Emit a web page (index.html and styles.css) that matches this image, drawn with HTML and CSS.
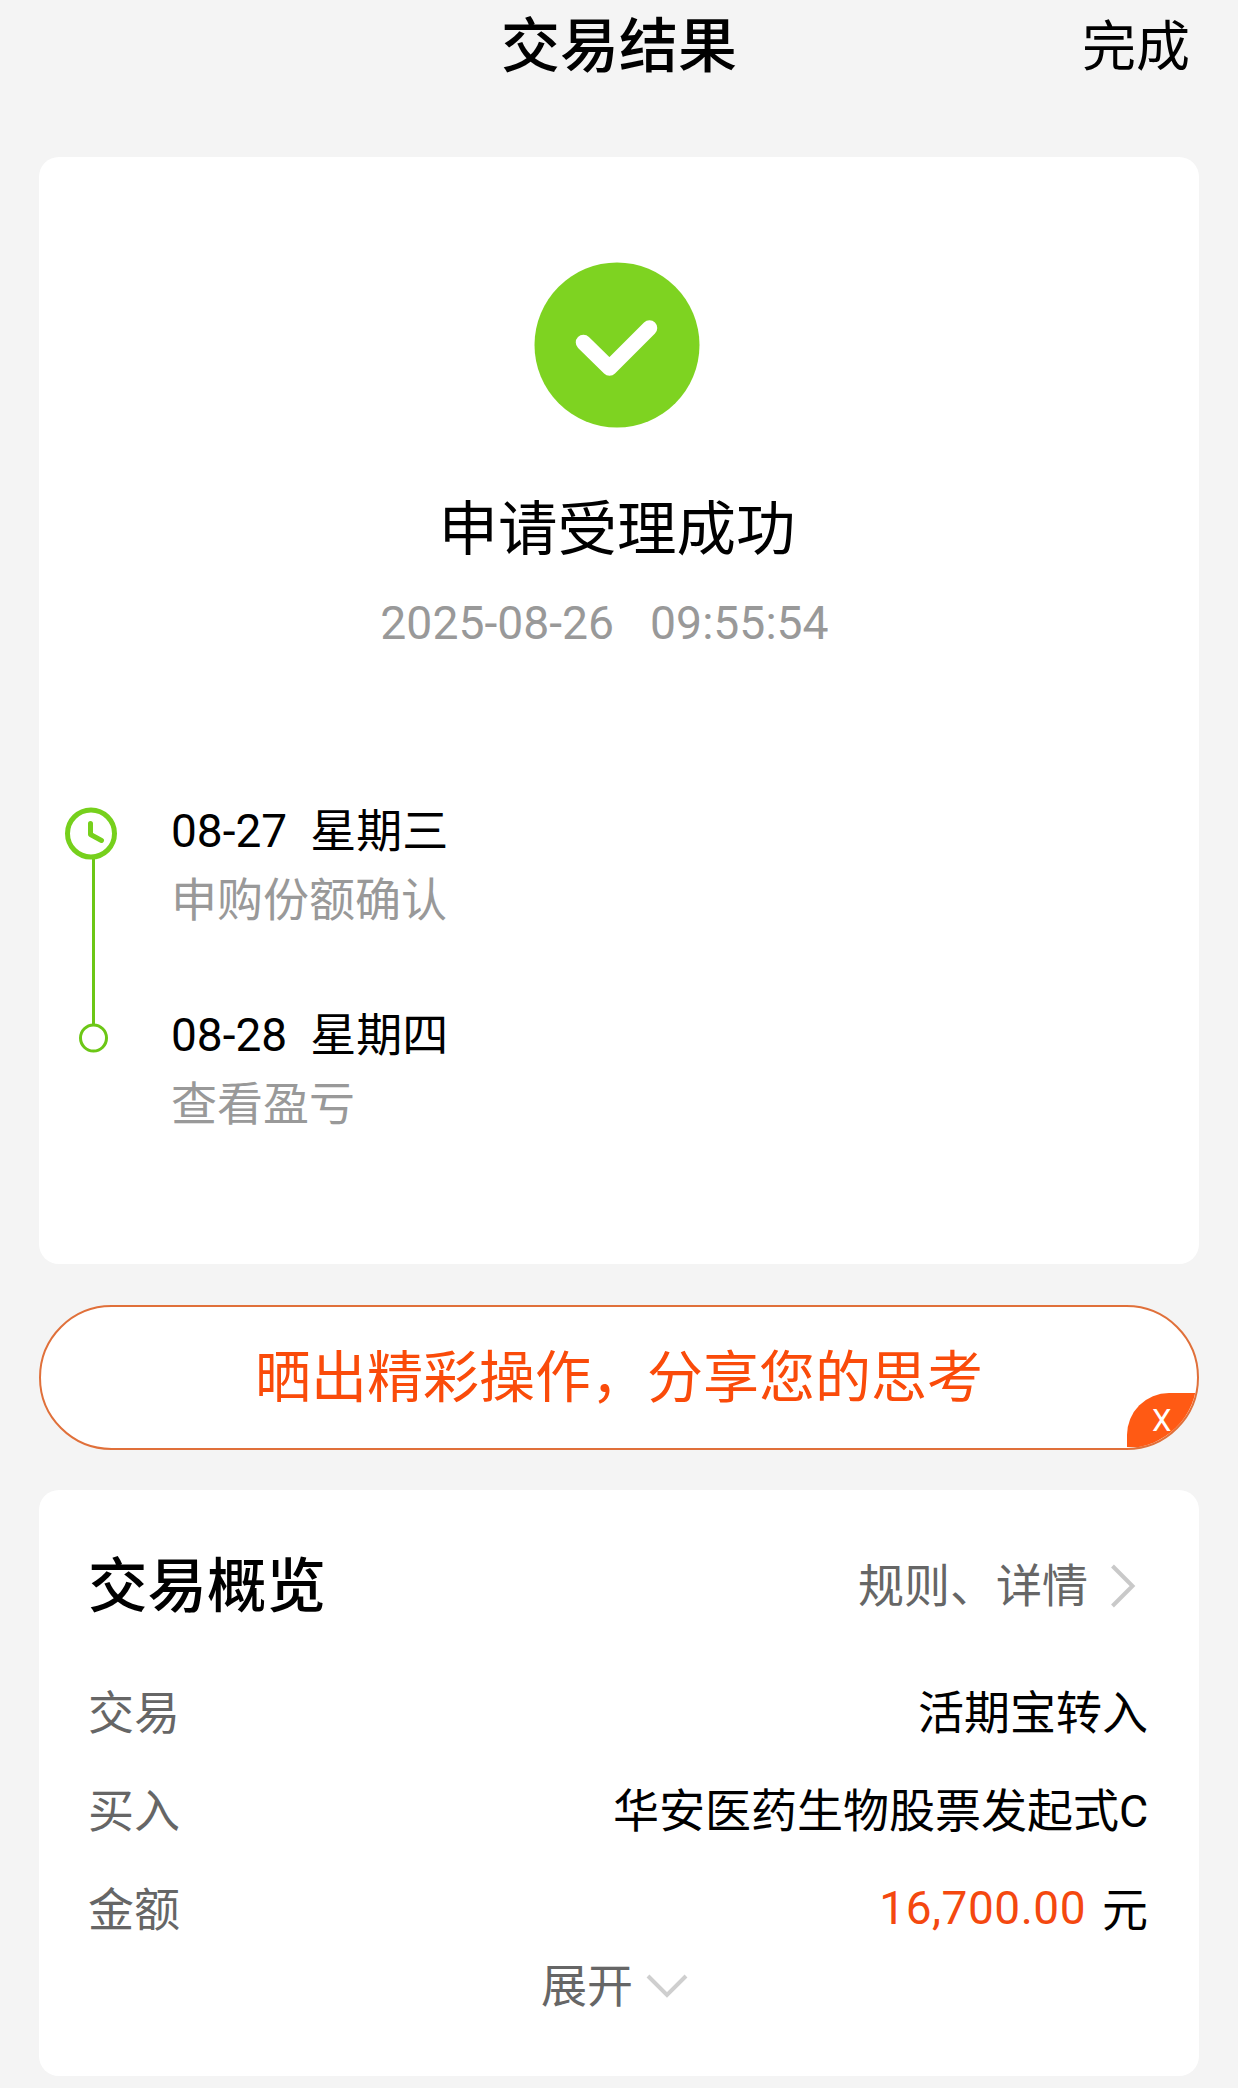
FILE: index.html
```html
<!DOCTYPE html>
<html lang="zh-CN">
<head>
<meta charset="utf-8">
<title>交易结果</title>
<link rel="stylesheet" href="styles.css">
</head>
<body>
<header class="topbar">
  <h1 class="topbar-title">交易结果</h1>
  <a class="topbar-done">完成</a>
</header>
<main class="content">
  <section class="card result">
    <svg class="result-icon" viewBox="0 0 166 166"><circle cx="83" cy="83" r="82.5" fill="#7ed321"/><path d="M49.500 80.500L75.500 106L115.500 66" fill="none" stroke="#fff" stroke-width="15.500" stroke-linecap="round" stroke-linejoin="round"/></svg>
    <h2 class="result-title">申请受理成功</h2>
    <p class="result-time"><span>2025-08-26</span><span>09:55:54</span></p>
    <div class="timeline">
      <svg class="timeline-rail" viewBox="0 0 56 250"><path d="M30.500 52V219" stroke="#6cc716" stroke-width="3"/><circle cx="28" cy="27.500" r="23.500" fill="#fff" stroke="#76d01c" stroke-width="5"/><path d="M27.500 17.500V28.500L38.500 34.500" fill="none" stroke="#76d01c" stroke-width="5" stroke-linecap="round" stroke-linejoin="round"/><circle cx="30.500" cy="232" r="13" fill="#fff" stroke="#6cc716" stroke-width="3"/></svg>
      <ol class="steps">
        <li class="step"><p class="step-date"><span>08-27</span><span>星期三</span></p><p class="step-note">申购份额确认</p></li>
        <li class="step"><p class="step-date"><span>08-28</span><span>星期四</span></p><p class="step-note">查看盈亏</p></li>
      </ol>
    </div>
  </section>
  <section class="share">
    <span class="share-text">晒出精彩操作，分享您的思考</span>
    <span class="share-close">X</span>
  </section>
  <section class="card overview">
    <div class="overview-head">
      <h2 class="overview-title">交易概览</h2>
      <a class="overview-link">规则、详情<svg class="chevron-right" viewBox="0 0 26 44"><path d="M2.500 2L22.500 22L2.500 42" fill="none" stroke="#c9c9c9" stroke-width="4"/></svg></a>
    </div>
    <dl class="rows">
      <div class="row"><dt>交易</dt><dd>活期宝转入</dd></div>
      <div class="row"><dt>买入</dt><dd>华安医药生物股票发起式<span class="share-class">C</span></dd></div>
      <div class="row"><dt>金额</dt><dd><span class="amount">16,700.00</span>元</dd></div>
    </dl>
    <a class="expand">展开<svg class="chevron-down" viewBox="0 0 42 24"><path d="M2 2L21 21L40 2" fill="none" stroke="#cfcfcf" stroke-width="4"/></svg></a>
  </section>
</main>
</body>
</html>
```

FILE: styles.css
```css
* {
  box-sizing: border-box;
  margin: 0;
  padding: 0;
}

body {
  background: #f4f4f4;
  color: #000;
  font-family: Roboto, "Noto Sans CJK SC", sans-serif;
  font-size: 46px;
  line-height: 60px;
}

.topbar {
  display: grid;
  grid-template-columns: 1fr auto 1fr;
  align-items: center;
  height: 92px;
  padding: 0 48px;
}

.topbar-title {
  grid-column: 2;
  padding-top: 1px;
  font-size: 59px;
  font-weight: 500;
}

.topbar-done {
  justify-self: end;
  padding-top: 3px;
  font-size: 54px;
}

.content {
  display: flex;
  flex-direction: column;
  padding: 65px 39px 12px;
}

.card {
  background: #fff;
  border-radius: 20px;
}

.result {
  display: flex;
  flex-direction: column;
  align-items: center;
  height: 1107px;
  padding-top: 105px;
}

.result-icon {
  width: 166px;
  height: 166px;
  margin-right: 4px;
}

.result-title {
  margin-top: 72px;
  margin-right: 4px;
  font-size: 59.500px;
  font-weight: 400;
  line-height: 60px;
}

.result-time {
  display: flex;
  gap: 36px;
  margin-top: 33px;
  margin-right: 29px;
  color: #999;
  font-size: 46.300px;
}

.timeline {
  display: flex;
  align-self: stretch;
  gap: 52px;
  margin-top: 153px;
  padding-left: 24px;
}

.timeline-rail {
  width: 56px;
  height: 250px;
}

.steps {
  display: flex;
  flex-direction: column;
  gap: 75px;
  margin-top: -5px;
  list-style: none;
}

.step {
  display: flex;
  flex-direction: column;
  gap: 9px;
}

.step-date {
  display: flex;
  gap: 23px;
}

.step-note {
  color: #999;
}

.share {
  position: relative;
  display: flex;
  align-items: center;
  justify-content: center;
  height: 145px;
  margin: 41px 0 40px;
  overflow: hidden;
  background: #fff;
  border: 2px solid #e0703a;
  border-radius: 73px;
  color: #fa4b0a;
  font-size: 56px;
}

.share-close {
  position: absolute;
  right: 0;
  bottom: 1px;
  width: 70px;
  height: 54px;
  padding-left: 25px;
  background: #ff5a14;
  border-top-left-radius: 42px;
  color: #fff;
  font-size: 31px;
  line-height: 56px;
}

.overview {
  display: flex;
  flex-direction: column;
  height: 586px;
  padding: 67px 51px 0 49px;
}

.overview-head {
  display: flex;
  align-items: center;
  justify-content: space-between;
}

.overview-title {
  font-size: 59.500px;
  font-weight: 500;
}

.overview-link {
  display: flex;
  align-items: center;
  gap: 22px;
  margin-top: -3px;
  padding-right: 12px;
  color: #666;
}

.chevron-right {
  width: 26px;
  height: 44px;
}

.rows {
  display: flex;
  flex-direction: column;
  gap: 38px;
  margin-top: 66px;
}

.row {
  display: flex;
  justify-content: space-between;
}

.row dt {
  color: #666;
}

.share-class {
  display: inline-block;
  width: 29px;
  font-size: 45px;
}

.amount {
  position: relative;
  top: -2px;
  margin-right: 16px;
  color: #f4480f;
  letter-spacing: 0.500px;
}

.expand {
  display: flex;
  align-items: center;
  align-self: center;
  gap: 13px;
  margin-top: 16px;
  margin-right: 7px;
  color: #666;
}

.chevron-down {
  width: 42px;
  height: 24px;
}
```
